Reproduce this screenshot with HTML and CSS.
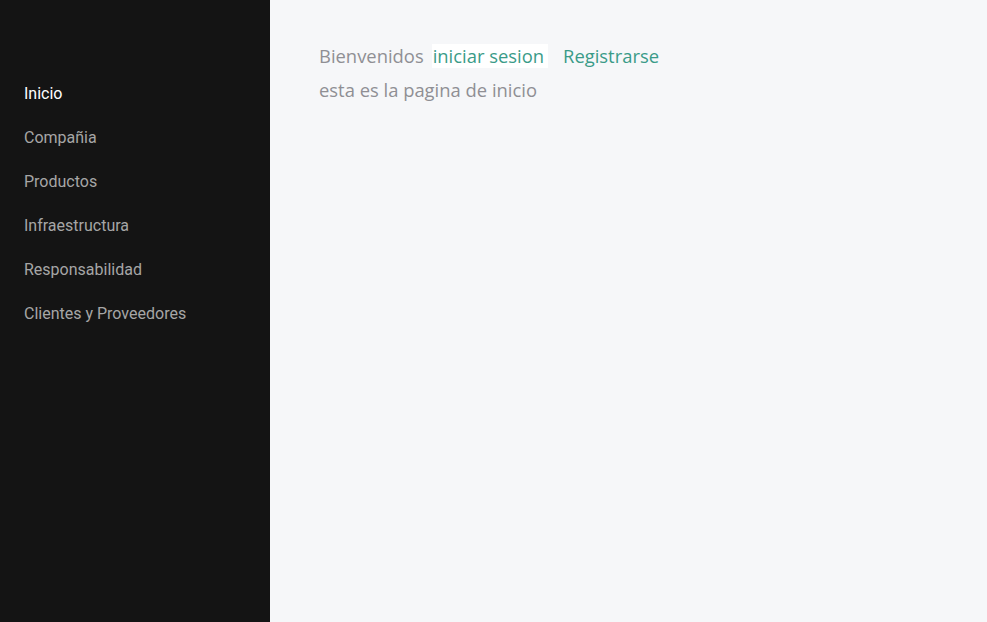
FILE: index.html
```html
<!DOCTYPE html>
<html lang="es">
<head>
<meta charset="utf-8">
<title>Inicio</title>
<link rel="stylesheet" href="styles.css">
</head>
<body>
<div class="layout">
  <nav class="sidebar">
    <a class="nav-item active" href="#">Inicio</a>
    <a class="nav-item" href="#">Compañia</a>
    <a class="nav-item" href="#">Productos</a>
    <a class="nav-item" href="#">Infraestructura</a>
    <a class="nav-item" href="#">Responsabilidad</a>
    <a class="nav-item" href="#">Clientes y Proveedores</a>
  </nav>
  <main class="content">
    <div class="line">
      <span class="muted">Bienvenidos</span>
      <a class="link boxed" href="#">iniciar sesion</a>
      <a class="link" href="#">Registrarse</a>
    </div>
    <div class="line muted">esta es la pagina de inicio</div>
  </main>
</div>
</body>
</html>
```
FILE: styles.css
```css
html, body {
  margin: 0;
  padding: 0;
  height: 100%;
}
.layout {
  display: flex;
  height: 100vh;
}
.sidebar {
  width: 270px;
  flex: none;
  background: #141414;
  display: flex;
  flex-direction: column;
  padding-top: 72px;
  box-sizing: border-box;
}
.nav-item {
  font-family: Roboto, "Liberation Sans", sans-serif;
  font-size: 16px;
  line-height: 44px;
  color: #a6a6a6;
  text-decoration: none;
  padding-left: 24px;
}
.nav-item.active {
  color: #ffffff;
}
.content {
  flex: 1;
  background: #f6f7f9;
  padding: 39px 49px;
  font-family: "Open Sans", "Noto Sans", sans-serif;
  font-size: 18.4px;
}
.line {
  line-height: 34px;
  display: flex;
  align-items: center;
}
.muted {
  color: #8f8f94;
}
.link {
  color: #3a9b88;
  text-decoration: none;
}
.boxed {
  background: #ffffff;
  line-height: 24px;
  padding: 0 4px 0 1px;
  margin-left: 8px;
  margin-right: 15px;
}
```
